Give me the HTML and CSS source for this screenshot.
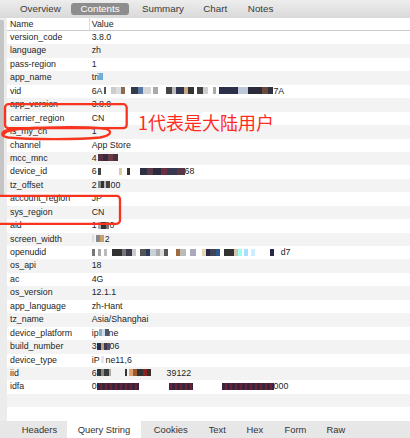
FILE: index.html
```html
<!DOCTYPE html>
<html>
<head>
<meta charset="utf-8">
<link rel="stylesheet" href="styles.css">
</head>
<body>
<div class="app">
  <div class="topbar">
    <span class="tab t-overview">Overview</span>
    <span class="tab t-contents active">Contents</span>
    <span class="tab t-summary">Summary</span>
    <span class="tab t-chart">Chart</span>
    <span class="tab t-notes">Notes</span>
  </div>
  <div class="main">
    <div class="gutter"><div class="thumb"></div></div>
    <div class="table">
      <div class="row head"><div class="k">Name</div><div class="v">Value</div></div>
      <div class="row"><div class="k">version_code</div><div class="v">3.8.0</div></div>
      <div class="row"><div class="k">language</div><div class="v">zh</div></div>
      <div class="row"><div class="k">pass-region</div><div class="v">1</div></div>
      <div class="row"><div class="k">app_name</div><div class="v">trill</div></div>
      <div class="row"><div class="k">vid</div><div class="v">6A<span class="mz mz-vid"></span>7A</div></div>
      <div class="row"><div class="k">app_version</div><div class="v">3.8.0</div></div>
      <div class="row"><div class="k">carrier_region</div><div class="v">CN</div></div>
      <div class="row"><div class="k">is_my_cn</div><div class="v">1</div></div>
      <div class="row"><div class="k">channel</div><div class="v">App Store</div></div>
      <div class="row"><div class="k">mcc_mnc</div><div class="v">4<span class="mz mz-mcc"></span></div></div>
      <div class="row"><div class="k">device_id</div><div class="v">6<span class="mz mz-dev"></span>68</div></div>
      <div class="row"><div class="k">tz_offset</div><div class="v">2<span class="mz mz-tz"></span>00</div></div>
      <div class="row"><div class="k">account_region</div><div class="v">JP</div></div>
      <div class="row"><div class="k">sys_region</div><div class="v">CN</div></div>
      <div class="row"><div class="k">aid</div><div class="v">1<span class="mz mz-aid"></span>0</div></div>
      <div class="row"><div class="k">screen_width</div><div class="v"><span class="mz mz-sw"></span>2</div></div>
      <div class="row"><div class="k">openudid</div><div class="v"><span class="mz mz-ou"></span>d7</div></div>
      <div class="row"><div class="k">os_api</div><div class="v">18</div></div>
      <div class="row"><div class="k">ac</div><div class="v">4G</div></div>
      <div class="row"><div class="k">os_version</div><div class="v">12.1.1</div></div>
      <div class="row"><div class="k">app_language</div><div class="v">zh-Hant</div></div>
      <div class="row"><div class="k">tz_name</div><div class="v">Asia/Shanghai</div></div>
      <div class="row"><div class="k">device_platform</div><div class="v">ip<span class="mz mz-dp"></span>ne</div></div>
      <div class="row"><div class="k">build_number</div><div class="v">3<span class="mz mz-bn"></span>06</div></div>
      <div class="row"><div class="k">device_type</div><div class="v">iP<span class="mz mz-dt"></span>ne11,6</div></div>
      <div class="row"><div class="k">iid</div><div class="v">6<span class="mz mz-iid"></span>39122</div></div>
      <div class="row"><div class="k">idfa</div><div class="v">0<span class="mz mz-idfa"></span>000</div></div>
      <div class="row"><div class="k"></div><div class="v"></div></div>
      <div class="row"><div class="k"></div><div class="v"></div></div>
    </div>
  </div>
  <div class="bottombar">
    <span class="btab b-headers">Headers</span>
    <span class="btab b-query active">Query String</span>
    <span class="btab b-cookies">Cookies</span>
    <span class="btab b-text">Text</span>
    <span class="btab b-hex">Hex</span>
    <span class="btab b-form">Form</span>
    <span class="btab b-raw">Raw</span>
  </div>
  <svg class="marks" width="410" height="438" viewBox="0 0 410 438">
    <rect x="5" y="104.2" width="121.7" height="24" rx="3.5" class="mark"/>
    <path class="mark" d="M22 129 C50 126.5 95 126.5 106 129 C113 131.5 111 135.5 100 137.5 C75 140 30 139.5 8 137.5 C0 136 0 131.5 10 129.5 C16 128.5 30 127.8 46 127.6"/>
    <path class="mark" d="M4 134 C5 130.5 18 128.3 38 128"/>
    <rect x="-4" y="195.8" width="124" height="28" rx="3.5" class="mark"/>
  </svg>
  <div class="note">1代表是大陆用户</div>
</div>
</body>
</html>
```
FILE: styles.css
```css
* { box-sizing: border-box; }
html, body { margin: 0; padding: 0; }
body {
  width: 410px;
  height: 438px;
  overflow: hidden;
  background: #fff;
  font-family: "Liberation Sans", Arial, sans-serif;
  color: #1e1e1e;
}
.app {
  position: relative;
  width: 410px;
  height: 438px;
  display: flex;
  flex-direction: column;
}

/* top segmented tabs */
.topbar {
  height: 18px;
  flex: none;
  display: flex;
  align-items: center;
  background: linear-gradient(#ededed, #d9d9d9);
  font-size: 9.8px;
  color: #3a3a3a;
}
.tab {
  height: 11.7px;
  line-height: 11.7px;
  padding: 0 9.4px;
  border-radius: 3px;
  white-space: nowrap;
}
.tab.active { background: #8d8d8d; color: #fff; }
.t-overview { margin-left: 10.6px; }
.t-contents { margin-left: 0.8px; }
.t-summary { margin-left: 3.5px; }
.t-chart { margin-left: 0.7px; }
.t-notes { margin-left: 1.8px; }

/* table */
.main { flex: 1; display: flex; min-height: 0; }
.gutter { width: 7px; flex: none; background: #ececec; padding-top: 2px; }
.thumb { width: 3.5px; height: 177px; background: #c5c5c5; border-radius: 0 2px 2px 0; }
.table { flex: 1; font-size: 8.8px; min-width: 0; }
.row {
  display: grid;
  grid-template-columns: 82px 1fr;
  height: 13.45px;
  line-height: 13.45px;
  white-space: nowrap;
  overflow: hidden;
}
.row:nth-child(odd) { background: #f3f3f3; }
.row.head {
  background: #fff;
  height: 13px;
  line-height: 12px;
  border-bottom: 1px solid #cbcbcb;
}
.k { padding-left: 3px; }
.v { padding-left: 2.7px; }
.head .v { border-left: 1px solid #dcdcdc; padding-left: 1.7px; }

/* pixelated (blurred) values */
.mz { display: inline-block; height: 7px; vertical-align: -0.5px; }
.mz-vid {
  width: 171px;
  background: linear-gradient(90deg, transparent 0 2px, #555 2px 4px, transparent 4px 9px, #ccc 9px 14px, #ddd 14px 19px, #8a6a50 19px 23px, transparent 23px 29px, #333a4a 29px 36px, #5a7aa8 36px 41px, #d8d8d8 41px 49px, transparent 49px 51px, #aaa 51px 56px, transparent 56px 64px, #444 64px 70px, #bbb 70px 74px, #2f3550 74px 82px, #c8a880 82px 86px, #333 86px 92px, transparent 92px 95px, #444 95px 101px, #d0d0d0 101px 106px, transparent 106px 111px, #aaa 111px 114px, transparent 114px 117px, #2c2f4a 117px 136px, #bcc8d8 136px 146px, #2a2a3a 146px 160px, #6a4a3a 160px 166px, #303040 166px 171px);
}
.mz-mcc { width: 20px; margin-left: 1px; background: linear-gradient(90deg, #5a3040 0 5px, #3a2a40 5px 10px, #6a3a45 10px 15px, #4a2f3f 15px 20px); }
.mz-dev {
  width: 88px;
  background: linear-gradient(90deg, transparent 0 1px, #444 1px 4px, transparent 4px 22px, #e0c8a0 22px 25px, transparent 25px 30px, #3a3030 30px 33px, transparent 33px 43px, #303045 43px 50px, #5a3a48 50px 56px, #2a2a40 56px 64px, #6a3040 64px 70px, #383850 70px 80px, #5a3545 80px 88px);
}
.mz-tz { width: 12px; margin: 0 1px; background: linear-gradient(90deg, #888 0 3px, #333 3px 6px, #bbb 6px 8px, #444 8px 12px); }
.mz-aid { width: 11px; margin: 0 1px; background: linear-gradient(90deg, #aaa 0 3px, #333 3px 8px, #777 8px 11px); }
.mz-sw { width: 12px; margin-right: 1px; background: linear-gradient(90deg, #ddd 0 2px, transparent 2px 4px, #888 4px 8px, #c8a070 8px 12px); }
.mz-ou {
  width: 189px;
  background: linear-gradient(90deg, #777 0 3px, transparent 3px 6px, #aaa 6px 9px, transparent 9px 12px, #bbb 12px 15px, transparent 15px 20px, #333 20px 30px, #777 30px 34px, #3a3a4a 34px 40px, #ccc 40px 44px, transparent 44px 48px, #555 48px 54px, #2a3a5a 54px 58px, #c8d0d8 58px 64px, #aaa 64px 68px, #ddd 68px 72px, #555 72px 76px, transparent 76px 84px, #a06a40 84px 88px, #bbb 88px 94px, transparent 94px 98px, #aab 98px 104px, transparent 104px 110px, #e8d8b0 110px 114px, #2a2a50 114px 118px, #445 118px 124px, #2a5a90 124px 128px, transparent 128px 132px, #333 132px 142px, #d8c0b0 142px 146px, #9fe 146px 150px, transparent 150px 152px, #adf 152px 156px, transparent 156px 159px, #cef 159px 163px, transparent 163px 178px, #2a2a4a 178px 182px, transparent 182px 189px);
}
.mz-dp { width: 10px; background: linear-gradient(90deg, #9ab 0 3px, #cde 3px 6px, #556 6px 10px); }
.mz-bn { width: 13px; background: linear-gradient(90deg, #2a2a4a 0 4px, #c8a070 4px 7px, #3a3a5a 7px 10px, #556 10px 13px); }
.mz-dt { width: 6px; background: linear-gradient(90deg, transparent 0 1px, #dde8f0 1px 4px, transparent 4px 6px); }
.mz-iid {
  width: 70px;
  background: linear-gradient(90deg, #333 0 4px, #888 4px 7px, #3a3a3a 7px 12px, #aaa 12px 14px, transparent 14px 28px, #333 28px 30px, transparent 30px 32px, #e0a070 32px 36px, #a05a30 36px 40px, #333 40px 46px, #8a2020 46px 50px, #3a2a2a 50px 54px, transparent 54px 70px);
}
.mz-idfa {
  width: 177px;
  background:
    linear-gradient(90deg, transparent 0 42px, #fff 42px 72px, transparent 72px 96px, #fff 96px 125px, transparent 125px),
    repeating-linear-gradient(90deg, #3a2540 0 3px, #6b2233 3px 5px);
}

/* bottom tabs */
.bottombar {
  height: 17px;
  flex: none;
  display: flex;
  background: #e7e7e7;
  font-size: 9.4px;
  color: #333;
}
.btab { line-height: 17px; white-space: nowrap; }
.btab.active { background: #fff; padding: 0 11px; }
.b-headers { margin-left: 21.7px; }
.b-query { margin-left: 9.5px; }
.b-cookies { margin-left: 12.5px; }
.b-text { margin-left: 21px; }
.b-hex { margin-left: 20.7px; }
.b-form { margin-left: 21.3px; }
.b-raw { margin-left: 20.1px; }

/* red annotations */
.marks { position: absolute; left: 0; top: 0; pointer-events: none; overflow: visible; }
.mark { fill: none; stroke: #f8341f; stroke-width: 2.3; stroke-linecap: round; stroke-linejoin: round; }
.note {
  position: absolute;
  left: 138px;
  top: 113px;
  font-family: "Noto Sans CJK SC", sans-serif;
  font-size: 18px;
  line-height: 18px;
  color: #ff2b1f;
  white-space: nowrap;
}
```
